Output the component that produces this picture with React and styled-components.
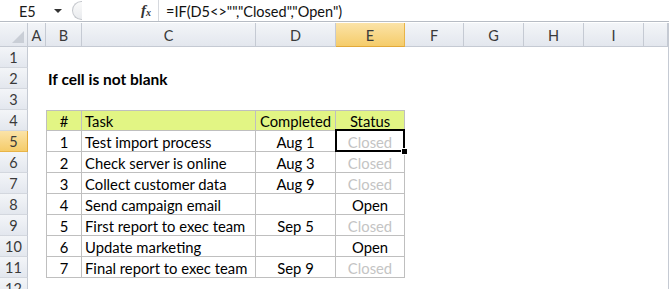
import React from 'react'
import styled, { createGlobalStyle } from 'styled-components'

const GlobalStyle = createGlobalStyle`
  body {
    margin: 0;
    background: #ffffff;
    font-family: Lato, 'Liberation Sans', sans-serif;
  }
`

const columns = ['A', 'B', 'C', 'D', 'E', 'F', 'G', 'H', 'I', '']
const widths = '28px 18px 36px 174px 80px 69px 59px 60px 60px 60px 24px 1fr'

const tasks = [
    ['1', 'Test import process', 'Aug 1', 'Closed'],
    ['2', 'Check server is online', 'Aug 3', 'Closed'],
    ['3', 'Collect customer data', 'Aug 9', 'Closed'],
    ['4', 'Send campaign email', '', 'Open'],
    ['5', 'First report to exec team', 'Sep 5', 'Closed'],
    ['6', 'Update marketing', '', 'Open'],
    ['7', 'Final report to exec team', 'Sep 9', 'Closed'],
]

export default function App(){
    const rows = []
    for (let r = 1; r <= 12; r++) {
        const cells = []
        if (r === 2) {
            cells.push(<Blank key='a' />)
            cells.push(<Title key='b'>If cell is not blank</Title>)
            cells.push(<Blank key='rest' $span={7} />)
        } else if (r === 4) {
            cells.push(<Blank key='a' />)
            cells.push(<TCell key='b' $head $first $top $center>#</TCell>)
            cells.push(<TCell key='c' $head $top>Task</TCell>)
            cells.push(<TCell key='d' $head $top $center>Completed</TCell>)
            cells.push(<TCell key='e' $head $top $center>Status</TCell>)
            cells.push(<Blank key='rest' $span={5} />)
        } else if (r >= 5 && r <= 11) {
            const t = tasks[r - 5]
            cells.push(<Blank key='a' />)
            cells.push(<TCell key='b' $first $center>{t[0]}</TCell>)
            cells.push(<TCell key='c'>{t[1]}</TCell>)
            cells.push(<TCell key='d' $center>{t[2]}</TCell>)
            cells.push(
                <TCell key='e' $center $muted={t[3] === 'Closed'} $selected={r === 5}>
                    {t[3]}
                    {r === 5 && <Handle />}
                </TCell>
            )
            cells.push(<Blank key='rest' $span={5} />)
        } else {
            cells.push(<Blank key='all' $span={10} />)
        }
        rows.push(
            <React.Fragment key={r}>
                <RowHead $active={r === 5}>{r}</RowHead>
                {cells}
                <Edge />
            </React.Fragment>
        )
    }

    return(
    <Page>
        <GlobalStyle />
        <FormulaBar>
            <NameBox>
                <span>E5</span>
                <Arrow />
            </NameBox>
            <Grip />
            <FxArea>
                <Fx>f<sub>x</sub></Fx>
            </FxArea>
            <Formula>=IF(D5&lt;&gt;"","Closed","Open")</Formula>
        </FormulaBar>
        <Sheet>
            <Corner><Triangle /></Corner>
            {columns.map((c, i) => (
                <ColHead key={i} $active={c === 'E'}>{c}</ColHead>
            ))}
            <Edge />
            {rows}
        </Sheet>
    </Page>
    )
}

const Page = styled.div`
    width: 669px;
    height: 289px;
    overflow: hidden;
    background: #fff;
`

const FormulaBar = styled.div`
    display: flex;
    align-items: center;
    height: 21px;
    border-bottom: 1px solid #b7bcc4;
    background: #fff;
    margin-bottom: 1px;
`

const NameBox = styled.div`
    width: 68px;
    height: 100%;
    display: flex;
    align-items: center;
    justify-content: space-between;
    padding: 1px 6px 0 19px;
    box-sizing: border-box;
    font-size: 14.5px;
    color: #1a1a1a;
`

const Arrow = styled.div`
    width: 0;
    height: 0;
    border-left: 4px solid transparent;
    border-right: 4px solid transparent;
    border-top: 4px solid #333;
`

const Grip = styled.div`
    width: 10px;
    height: 19px;
    margin-left: 4px;
    border: 1px solid #c4c7cc;
    border-right: none;
    border-radius: 10px 0 0 10px;
    background: linear-gradient(#fafafa, #e9ebee);
    box-sizing: border-box;
`

const FxArea = styled.div`
    flex: 0 0 76px;
    height: 100%;
    display: flex;
    align-items: center;
    justify-content: flex-end;
    padding-right: 7px;
    box-sizing: border-box;
    background: #fff;
`

const Fx = styled.div`
    font-family: 'Liberation Serif', serif;
    font-style: italic;
    font-weight: bold;
    font-size: 15px;
    color: #333;
    sub {
        font-size: 10px;
        vertical-align: -1px;
    }
`

const Formula = styled.div`
    flex: 1;
    height: 100%;
    display: flex;
    align-items: center;
    padding: 1px 0 0 7px;
    border-left: 1px solid #d6d9de;
    font-size: 14.5px;
    color: #111;
    box-sizing: border-box;
`

const Sheet = styled.div`
    display: grid;
    grid-template-columns: ${widths};
    grid-template-rows: 24px;
    grid-auto-rows: 21px;
`

const headerBg = 'linear-gradient(#f3f5f8, #e3e7ee)'
const activeBg = 'linear-gradient(#fbe3a8, #f5cc6a)'

const Corner = styled.div`
    position: relative;
    background: ${headerBg};
    border-right: 1px solid #c5cad3;
    border-bottom: 1px solid #c5cad3;
    box-sizing: border-box;
`

const Triangle = styled.div`
    position: absolute;
    right: 3px;
    bottom: 3px;
    width: 0;
    height: 0;
    border-left: 12px solid transparent;
    border-bottom: 12px solid #c9ced6;
`

const ColHead = styled.div`
    display: flex;
    align-items: center;
    justify-content: center;
    background: ${p => p.$active ? activeBg : headerBg};
    border-right: 1px solid ${p => p.$active ? '#e8b447' : '#c5cad3'};
    border-bottom: 1px solid ${p => p.$active ? '#e2a93a' : '#c5cad3'};
    box-sizing: border-box;
    font-size: 14.5px;
    color: #3a3a3a;
    padding-top: 1px;
`

const RowHead = styled.div`
    display: flex;
    align-items: center;
    justify-content: center;
    background: ${p => p.$active ? activeBg : headerBg};
    border-right: 1px solid ${p => p.$active ? '#e2a93a' : '#c5cad3'};
    border-bottom: 1px solid ${p => p.$active ? '#e8b447' : '#d3d7de'};
    box-sizing: border-box;
    font-size: 14.5px;
    color: #3a3a3a;
`

const Edge = styled.div`
    border-left: 1px solid #c5cad3;
    background: #fff;
`

const Blank = styled.div`
    grid-column: span ${p => p.$span || 1};
    background: #fff;
`

const Title = styled.div`
    grid-column: span 2;
    display: flex;
    align-items: center;
    padding-left: 2px;
    font-weight: bold;
    font-size: 15.5px;
    color: #000;
    white-space: nowrap;
`

const TCell = styled.div`
    position: relative;
    display: flex;
    align-items: center;
    justify-content: ${p => p.$center ? 'center' : 'flex-start'};
    padding: 1px 3px 0;
    box-sizing: border-box;
    background: ${p => p.$head ? '#e2f584' : '#fff'};
    border-right: 1px solid #bfbfbf;
    border-bottom: 1px solid #bfbfbf;
    border-left: ${p => p.$first ? '1px solid #bfbfbf' : 'none'};
    border-top: ${p => p.$top ? '1px solid #bfbfbf' : 'none'};
    font-size: 14.8px;
    color: ${p => p.$muted ? '#c4c4c4' : '#000'};
    white-space: nowrap;
    ${p => p.$selected && `
        &::after {
            content: '';
            position: absolute;
            left: -1px;
            top: -2px;
            right: -1px;
            bottom: -1px;
            border: 2px solid #000;
        }
    `}
`

const Handle = styled.div`
    position: absolute;
    right: -4px;
    bottom: -4px;
    width: 5px;
    height: 5px;
    background: #000;
    border: 1px solid #fff;
    z-index: 2;
`
